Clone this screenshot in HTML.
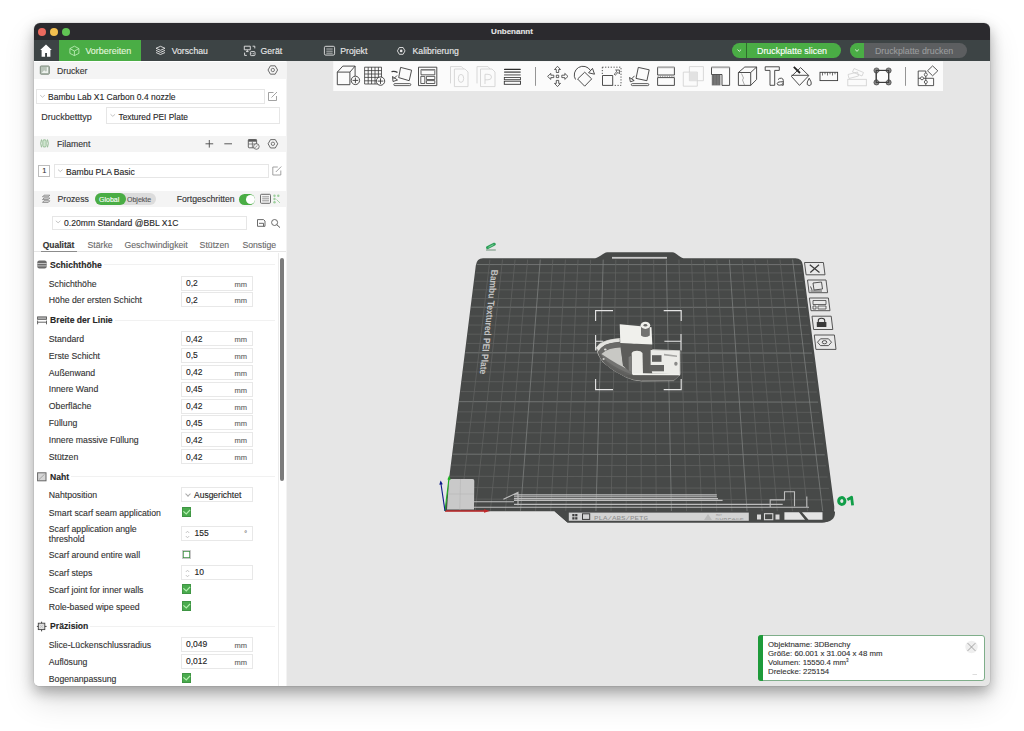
<!DOCTYPE html>
<html><head><meta charset="utf-8">
<style>
*{box-sizing:border-box;margin:0;padding:0}
html,body{width:1024px;height:731px;overflow:hidden;background:#ffffff;font-family:"Liberation Sans",sans-serif}
.a{position:absolute}
#win{position:absolute;left:34px;top:23px;width:956px;height:663px;border-radius:6px 6px 5px 5px;overflow:hidden;background:#e6e6e6;box-shadow:0 0 0 0.5px rgba(0,0,0,0.1),0 6px 14px rgba(0,0,0,0.3),0 14px 32px rgba(0,0,0,0.14)}
#pg{position:absolute;left:-34px;top:-23px;width:1024px;height:731px}
.dot{top:28px;width:8px;height:8px;border-radius:50%}
.tab{top:40.8px;height:20px;color:#eaeaea;font-size:8.7px;line-height:20px;white-space:nowrap}
.hdr{left:34px;width:252px;background:#f4f4f4;}
.ht{font-size:8.7px;color:#333;white-space:nowrap;line-height:10px}
.combo{border:1px solid #e6e6e6;background:#fff;font-size:8.5px;color:#262626;white-space:nowrap;line-height:12px}
.lbl{font-size:8.7px;color:#333;white-space:nowrap;line-height:10px}
.grp{font-size:8.6px;font-weight:bold;color:#262626;white-space:nowrap;line-height:10px}
.inp{position:absolute;left:181px;border:1px solid #e8e8e8;background:#fff;width:72px;height:15px;font-size:8.5px;color:#222;}
.inp .v{position:absolute;left:4px;top:1.5px;line-height:10px}
.inp .u{position:absolute;right:5px;top:3px;font-size:7.5px;color:#666;line-height:10px}
.chk{position:absolute;left:181.8px;width:9.6px;height:9.6px;border-radius:0.6px;background:#4aab4e;box-shadow:inset 0 0 0 0.7px #3b8f40}
svg{position:absolute;overflow:visible}
#pg div{-webkit-text-stroke:0.12px currentColor}
.chev{position:absolute;left:4px;top:4px;width:4px;height:4px;border-right:0.7px solid #aaa;border-bottom:0.7px solid #aaa;transform:rotate(45deg)}
</style></head>
<body>
<div id="win"><div id="pg">
  <!-- title bar -->
  <div class="a" style="left:34px;top:23px;width:956px;height:17px;background:#2b2a2e"></div>
  <div class="a" style="left:34px;top:23px;width:956px;height:17px;color:#e6e6e6;font-weight:bold;font-size:8px;text-align:center;line-height:17px">Unbenannt</div>
  <div class="a dot" style="left:38px;top:27.5px;background:#ec6a5e"></div>
  <div class="a dot" style="left:50px;top:27.5px;background:#f4bf4f"></div>
  <div class="a dot" style="left:62px;top:27.5px;background:#61c454"></div>
  <!-- tab bar -->
  <div class="a" style="left:34px;top:40px;width:956px;height:20.5px;background:#3d4445"></div>
  <div class="a" style="left:58.7px;top:40px;width:82px;height:20.5px;background:#4aad45"></div>
  <div class="a tab" style="left:85.4px;font-size:8.95px;color:#e2f6dc">Vorbereiten</div>
  <div class="a tab" style="left:171.7px">Vorschau</div>
  <div class="a tab" style="left:260.5px">Gerät</div>
  <div class="a tab" style="left:340.3px">Projekt</div>
  <div class="a tab" style="left:412.5px">Kalibrierung</div>
  <!-- slice buttons -->
  <div class="a" style="left:732px;top:43.3px;width:109px;height:14.5px;border-radius:7.5px;background:#4aad45"></div>
  <div class="a" style="left:746px;top:43.3px;width:0.7px;height:14.5px;background:#2f6b2d"></div>
  <div class="a" style="left:757px;top:44.2px;line-height:14.5px;font-size:8.9px;color:#fff;white-space:nowrap">Druckplatte slicen</div>
  <div class="a" style="left:850px;top:43.3px;width:117px;height:14.5px;border-radius:7.5px;background:#5c5e60"></div>
  <div class="a" style="left:850px;top:43.3px;width:14px;height:14.5px;border-radius:7.5px 0 0 7.5px;background:#4aad45"></div>
  <div class="a" style="left:875px;top:44.2px;line-height:14.5px;font-size:8.8px;color:#9a9c9d;white-space:nowrap">Druckplatte drucken</div>

  <!-- left panel -->
  <div class="a" style="left:34px;top:60.5px;width:252px;height:626px;background:#fff"></div>
  <div class="a hdr" style="top:62px;height:16.5px"></div>
  <div class="a ht" style="left:57px;top:65.5px">Drucker</div>
  <div class="a combo" style="left:35.5px;top:89px;width:229px;height:14.6px"></div>
  <div class="a" style="left:48px;top:92.2px;font-size:8.5px;color:#262626;white-space:nowrap;line-height:10px">Bambu Lab X1 Carbon 0.4 nozzle</div>
  <div class="a lbl" style="left:41.2px;top:111.5px;font-size:9px">Druckbetttyp</div>
  <div class="a combo" style="left:106.2px;top:107px;width:173.5px;height:17.4px"></div>
  <div class="a" style="left:118.5px;top:111.5px;font-size:8.4px;color:#262626;white-space:nowrap;line-height:10px">Textured PEI Plate</div>
  <div class="a hdr" style="top:135.5px;height:16.5px"></div>
  <div class="a ht" style="left:57px;top:139px">Filament</div>
  <div class="a" style="left:38.4px;top:164.6px;width:12px;height:12.2px;border:1px solid #bdbdbd;font-size:7.5px;text-align:center;line-height:10px;color:#333">1</div>
  <div class="a combo" style="left:54px;top:164.3px;width:214.5px;height:14px"></div>
  <div class="a" style="left:66px;top:167px;font-size:8.6px;color:#262626;white-space:nowrap;line-height:10px">Bambu PLA Basic</div>
  <div class="a hdr" style="top:191px;height:16px"></div>
  <div class="a ht" style="left:57.5px;top:194px">Prozess</div>
  <div class="a" style="left:94.7px;top:193px;width:61px;height:12px;border-radius:6px;background:#dcdcdc"></div>
  <div class="a" style="left:94.7px;top:193px;width:31.5px;height:12px;border-radius:6px;background:#4aad45"></div>
  <div class="a" style="left:99px;top:195px;font-size:7px;color:#fff;line-height:9px">Global</div>
  <div class="a" style="left:127px;top:195px;font-size:7px;color:#555;line-height:9px">Objekte</div>
  <div class="a ht" style="left:176.7px;top:194px">Fortgeschritten</div>
  <div class="a" style="left:239.4px;top:193.5px;width:16px;height:11px;border-radius:6px;background:#4aad45"></div>
  <div class="a" style="left:245.5px;top:194.5px;width:9px;height:9px;border-radius:50%;background:#fff"></div>
  <div class="a combo" style="left:51.6px;top:215.5px;width:195px;height:14px"></div>
  <div class="a" style="left:64px;top:217.5px;font-size:8.6px;color:#262626;white-space:nowrap;line-height:10px">0.20mm Standard @BBL X1C</div>
  <!-- process tabs -->
  <div class="a" style="left:42.7px;top:239.8px;font-size:8.5px;font-weight:bold;color:#333;line-height:10px">Qualität</div>
  <div class="a lbl" style="left:87.5px;top:239.8px;color:#6a6a6a">Stärke</div>
  <div class="a lbl" style="left:124.4px;top:239.8px;color:#6a6a6a">Geschwindigkeit</div>
  <div class="a lbl" style="left:199.6px;top:239.8px;color:#6a6a6a">Stützen</div>
  <div class="a lbl" style="left:242.4px;top:239.8px;color:#6a6a6a">Sonstige</div>
  <div class="a" style="left:34px;top:250.7px;width:252px;height:1px;background:#e6e6e6"></div>
  <div class="a" style="left:40.5px;top:250.7px;width:36.5px;height:1px;background:#8c8c8c"></div>
  <div id="settings">
<svg style="left:37px;top:260.3px" width="10" height="9" viewBox="0 0 10 9"><rect x="0.3" y="0.5" width="9.4" height="8" rx="2" fill="#6b6b6b"/><rect x="0.3" y="3" width="9.4" height="0.8" fill="#d8d8d8"/><rect x="0.3" y="5.5" width="9.4" height="0.8" fill="#d8d8d8"/></svg>
<div class="a grp" style="left:50.1px;top:259.8px">Schichthöhe</div>
<div class="a" style="left:103.7px;top:264.3px;width:171.3px;height:1px;background:#f1f1f1"></div>
<div class="a lbl" style="left:48.8px;top:278.6px">Schichthöhe</div>
<div class="inp" style="top:275.8px"><span class="v">0,2</span><span class="u">mm</span></div>
<div class="a lbl" style="left:48.8px;top:295.2px">Höhe der ersten Schicht</div>
<div class="inp" style="top:292.4px"><span class="v">0,2</span><span class="u">mm</span></div>
<svg style="left:37px;top:315.8px" width="10" height="9" viewBox="0 0 10 9"><rect x="0.6" y="0.9" width="8.9" height="2.4" fill="#bbb" stroke="#555" stroke-width="0.9"/><path d="M0.6,4.6 V8.3 M9.5,4.6 V8.3 M0.6,6.2 H9.5" fill="none" stroke="#555" stroke-width="0.9"/></svg>
<div class="a grp" style="left:50.1px;top:315.3px">Breite der Linie</div>
<div class="a" style="left:114.7px;top:319.8px;width:160.3px;height:1px;background:#f1f1f1"></div>
<div class="a lbl" style="left:48.8px;top:333.8px">Standard</div>
<div class="inp" style="top:331.0px"><span class="v">0,42</span><span class="u">mm</span></div>
<div class="a lbl" style="left:48.8px;top:350.5px">Erste Schicht</div>
<div class="inp" style="top:347.7px"><span class="v">0,5</span><span class="u">mm</span></div>
<div class="a lbl" style="left:48.8px;top:367.5px">Außenwand</div>
<div class="inp" style="top:364.7px"><span class="v">0,42</span><span class="u">mm</span></div>
<div class="a lbl" style="left:48.8px;top:384.4px">Innere Wand</div>
<div class="inp" style="top:381.6px"><span class="v">0,45</span><span class="u">mm</span></div>
<div class="a lbl" style="left:48.8px;top:401.3px">Oberfläche</div>
<div class="inp" style="top:398.5px"><span class="v">0,42</span><span class="u">mm</span></div>
<div class="a lbl" style="left:48.8px;top:418.2px">Füllung</div>
<div class="inp" style="top:415.4px"><span class="v">0,45</span><span class="u">mm</span></div>
<div class="a lbl" style="left:48.8px;top:435.1px">Innere massive Füllung</div>
<div class="inp" style="top:432.3px"><span class="v">0,42</span><span class="u">mm</span></div>
<div class="a lbl" style="left:48.8px;top:452.0px">Stützen</div>
<div class="inp" style="top:449.2px"><span class="v">0,42</span><span class="u">mm</span></div>
<svg style="left:37px;top:472.2px" width="10" height="10" viewBox="0 0 10 10"><rect x="0.6" y="0.8" width="8.4" height="8" fill="#d6d6d6" stroke="#666" stroke-width="1"/><path d="M2,7.5 L7.6,2.2" stroke="#999" stroke-width="0.8"/></svg>
<div class="a grp" style="left:50.1px;top:471.7px">Naht</div>
<div class="a" style="left:71.2px;top:476.2px;width:203.8px;height:1px;background:#f1f1f1"></div>
<div class="a lbl" style="left:48.8px;top:490.2px">Nahtposition</div>
<div class="inp" style="top:487.4px"><span class="chev"></span><span class="v" style="left:12px">Ausgerichtet</span></div>
<div class="a lbl" style="left:48.8px;top:507.5px">Smart scarf seam application</div>
<div class="chk" style="top:507.0px"><svg style="left:0;top:0" width="10" height="10" viewBox="0 0 10 10"><path d="M1.4,4.4 L4.3,6.9 L8.1,2.9" fill="none" stroke="#b5f0b0" stroke-width="1.25"/></svg></div>
<div class="a lbl" style="left:48.8px;top:523.7px">Scarf application angle</div>
<div class="a lbl" style="left:48.8px;top:533.9px">threshold</div>
<div class="inp" style="top:525.7px"><svg style="left:3px;top:3px" width="5" height="9" viewBox="0 0 5 9"><path d="M0.8 3L2.5 1.2L4.2 3M0.8 6L2.5 7.8L4.2 6" fill="none" stroke="#b0b0b0" stroke-width="0.7"/></svg><span class="v" style="left:12.5px">155</span><span class="u" style="top:2px;font-size:7px">°</span></div>
<div class="a lbl" style="left:48.8px;top:550.4px">Scarf around entire wall</div>
<div class="chk" style="top:549.9px;background:#fff;border:1px solid #c8c8c8"></div>
<div class="a lbl" style="left:48.8px;top:567.5px">Scarf steps</div>
<div class="inp" style="top:564.7px"><svg style="left:3px;top:3px" width="5" height="9" viewBox="0 0 5 9"><path d="M0.8 3L2.5 1.2L4.2 3M0.8 6L2.5 7.8L4.2 6" fill="none" stroke="#b0b0b0" stroke-width="0.7"/></svg><span class="v" style="left:12.5px">10</span></div>
<div class="a lbl" style="left:48.8px;top:584.5px">Scarf joint for inner walls</div>
<div class="chk" style="top:584.0px"><svg style="left:0;top:0" width="10" height="10" viewBox="0 0 10 10"><path d="M1.4,4.4 L4.3,6.9 L8.1,2.9" fill="none" stroke="#b5f0b0" stroke-width="1.25"/></svg></div>
<div class="a lbl" style="left:48.8px;top:601.5px">Role-based wipe speed</div>
<div class="chk" style="top:601.0px"><svg style="left:0;top:0" width="10" height="10" viewBox="0 0 10 10"><path d="M1.4,4.4 L4.3,6.9 L8.1,2.9" fill="none" stroke="#b5f0b0" stroke-width="1.25"/></svg></div>
<svg style="left:36px;top:620.5px" width="11" height="11" viewBox="0 0 11 11"><path d="M5.6,0.7 V10.4 M0.9,5.4 H10.6" stroke="#444" stroke-width="1"/><rect x="2.3" y="2.2" width="6.5" height="6.4" fill="#e2e2e2" stroke="#444" stroke-width="0.9"/><path d="M3.5,3.5 L7.6,7.4 M7.6,3.5 L3.5,7.4" stroke="#bbb" stroke-width="0.7"/></svg>
<div class="a grp" style="left:50.1px;top:621.0px">Präzision</div>
<div class="a" style="left:90.3px;top:625.5px;width:184.7px;height:1px;background:#f1f1f1"></div>
<div class="a lbl" style="left:48.8px;top:639.6px">Slice-Lückenschlussradius</div>
<div class="inp" style="top:636.8px"><span class="v">0,049</span><span class="u">mm</span></div>
<div class="a lbl" style="left:48.8px;top:656.5px">Auflösung</div>
<div class="inp" style="top:653.7px"><span class="v">0,012</span><span class="u">mm</span></div>
<div class="a lbl" style="left:48.8px;top:673.7px">Bogenanpassung</div>
<div class="chk" style="top:673.2px"><svg style="left:0;top:0" width="10" height="10" viewBox="0 0 10 10"><path d="M1.4,4.4 L4.3,6.9 L8.1,2.9" fill="none" stroke="#b5f0b0" stroke-width="1.25"/></svg></div>
</div>
  <!-- canvas -->
<div id="canvas">
<svg style="left:0;top:0" width="1024" height="731" viewBox="0 0 1024 731">
<path d="M483,258.2 L595.2,258.2 C598,258.2 604,252.3 607.5,252.3 L672.2,252.3 C676,252.3 680.5,258.2 683.5,258.2 L795.5,258.2 Q802,258.2 802.8,265 L834.2,506 Q835.2,522.4 822,522.4 L567.5,522.4 L554.5,511.2 L445,511.2 L475.8,265.5 Q476.8,258.2 483,258.2 Z" fill="#474948"/>
<g>
<line x1="446.67" y1="499.06" x2="830.41" y2="499.87" stroke="#616362" stroke-width="0.75"/>
<line x1="448.14" y1="487.58" x2="828.96" y2="488.35" stroke="#616362" stroke-width="0.75"/>
<line x1="449.59" y1="476.27" x2="827.53" y2="477.00" stroke="#616362" stroke-width="0.75"/>
<line x1="451.01" y1="465.13" x2="826.12" y2="465.81" stroke="#616362" stroke-width="0.75"/>
<line x1="452.42" y1="454.16" x2="824.74" y2="454.80" stroke="#7f8180" stroke-width="0.75"/>
<line x1="453.80" y1="443.34" x2="823.37" y2="443.95" stroke="#616362" stroke-width="0.75"/>
<line x1="455.16" y1="432.69" x2="822.03" y2="433.26" stroke="#616362" stroke-width="0.75"/>
<line x1="456.51" y1="422.19" x2="820.70" y2="422.72" stroke="#616362" stroke-width="0.75"/>
<line x1="457.83" y1="411.85" x2="819.40" y2="412.34" stroke="#616362" stroke-width="0.75"/>
<line x1="459.14" y1="401.65" x2="818.11" y2="402.11" stroke="#7f8180" stroke-width="0.75"/>
<line x1="460.42" y1="391.60" x2="816.84" y2="392.02" stroke="#616362" stroke-width="0.75"/>
<line x1="461.69" y1="381.69" x2="815.59" y2="382.08" stroke="#616362" stroke-width="0.75"/>
<line x1="462.94" y1="371.92" x2="814.36" y2="372.28" stroke="#616362" stroke-width="0.75"/>
<line x1="464.18" y1="362.29" x2="813.14" y2="362.61" stroke="#616362" stroke-width="0.75"/>
<line x1="465.39" y1="352.79" x2="811.94" y2="353.08" stroke="#7f8180" stroke-width="0.75"/>
<line x1="466.59" y1="343.42" x2="810.76" y2="343.69" stroke="#616362" stroke-width="0.75"/>
<line x1="467.78" y1="334.18" x2="809.60" y2="334.42" stroke="#616362" stroke-width="0.75"/>
<line x1="468.95" y1="325.06" x2="808.45" y2="325.27" stroke="#616362" stroke-width="0.75"/>
<line x1="470.10" y1="316.07" x2="807.31" y2="316.25" stroke="#616362" stroke-width="0.75"/>
<line x1="471.23" y1="307.20" x2="806.19" y2="307.35" stroke="#7f8180" stroke-width="0.75"/>
<line x1="472.35" y1="298.44" x2="805.09" y2="298.57" stroke="#616362" stroke-width="0.75"/>
<line x1="473.46" y1="289.81" x2="804.00" y2="289.91" stroke="#616362" stroke-width="0.75"/>
<line x1="474.55" y1="281.28" x2="802.92" y2="281.36" stroke="#616362" stroke-width="0.75"/>
<line x1="475.63" y1="272.87" x2="801.86" y2="272.92" stroke="#616362" stroke-width="0.75"/>
<line x1="476.70" y1="264.56" x2="800.81" y2="264.60" stroke="#7f8180" stroke-width="0.75"/>
<line x1="460.23" y1="510.75" x2="489.91" y2="259.63" stroke="#616362" stroke-width="0.75"/>
<line x1="475.29" y1="510.79" x2="502.49" y2="259.63" stroke="#616362" stroke-width="0.75"/>
<line x1="490.36" y1="510.82" x2="515.07" y2="259.64" stroke="#616362" stroke-width="0.75"/>
<line x1="505.43" y1="510.85" x2="527.66" y2="259.64" stroke="#616362" stroke-width="0.75"/>
<line x1="520.50" y1="510.89" x2="540.25" y2="259.64" stroke="#7f8180" stroke-width="0.75"/>
<line x1="535.58" y1="510.92" x2="552.84" y2="259.64" stroke="#616362" stroke-width="0.75"/>
<line x1="550.66" y1="510.96" x2="565.43" y2="259.64" stroke="#616362" stroke-width="0.75"/>
<line x1="565.74" y1="510.99" x2="578.03" y2="259.64" stroke="#616362" stroke-width="0.75"/>
<line x1="580.83" y1="511.02" x2="590.63" y2="259.64" stroke="#616362" stroke-width="0.75"/>
<line x1="595.93" y1="511.06" x2="603.23" y2="259.64" stroke="#7f8180" stroke-width="0.75"/>
<line x1="611.02" y1="511.09" x2="615.84" y2="259.64" stroke="#616362" stroke-width="0.75"/>
<line x1="626.12" y1="511.12" x2="628.45" y2="259.64" stroke="#616362" stroke-width="0.75"/>
<line x1="641.23" y1="511.16" x2="641.06" y2="259.64" stroke="#616362" stroke-width="0.75"/>
<line x1="656.34" y1="511.19" x2="653.67" y2="259.64" stroke="#616362" stroke-width="0.75"/>
<line x1="671.45" y1="511.22" x2="666.29" y2="259.64" stroke="#7f8180" stroke-width="0.75"/>
<line x1="686.56" y1="511.26" x2="678.91" y2="259.64" stroke="#616362" stroke-width="0.75"/>
<line x1="701.68" y1="511.29" x2="691.53" y2="259.65" stroke="#616362" stroke-width="0.75"/>
<line x1="716.81" y1="511.32" x2="704.15" y2="259.65" stroke="#616362" stroke-width="0.75"/>
<line x1="731.94" y1="511.36" x2="716.78" y2="259.65" stroke="#616362" stroke-width="0.75"/>
<line x1="747.07" y1="511.39" x2="729.41" y2="259.65" stroke="#7f8180" stroke-width="0.75"/>
<line x1="762.20" y1="511.42" x2="742.04" y2="259.65" stroke="#616362" stroke-width="0.75"/>
<line x1="777.34" y1="511.46" x2="754.68" y2="259.65" stroke="#616362" stroke-width="0.75"/>
<line x1="792.49" y1="511.49" x2="767.32" y2="259.65" stroke="#616362" stroke-width="0.75"/>
<line x1="807.63" y1="511.53" x2="779.96" y2="259.65" stroke="#616362" stroke-width="0.75"/>
<line x1="822.78" y1="511.56" x2="792.60" y2="259.65" stroke="#7f8180" stroke-width="0.75"/>
</g>
<path d="M554.5,511.2 L834.3,511.2 L835,512 Q835.2,522.4 822,522.4 L567.5,522.4 Z" fill="#474948"/>
<rect x="612" y="256.9" width="55" height="1.8" fill="#c9c9c9"/>
<text transform="matrix(-0.112,0.994,-1,0,491.5,269.8)" font-family="Liberation Sans" font-weight="bold" font-size="9.6" fill="#c4c4c4" textLength="105" lengthAdjust="spacingAndGlyphs">Bambu Textured PEI Plate</text>
<path d="M450,479 L472.5,479 Q474.5,479 474.3,481 L474,509.5 L447,509.5 L449,481 Q449.2,479 450,479Z" fill="#c9c9c9"/>
<line x1="460.5" y1="479" x2="459.8" y2="509.5" stroke="#b5b5b5" stroke-width="0.6"/>
<line x1="448" y1="494" x2="474" y2="494" stroke="#b5b5b5" stroke-width="0.6"/>
<path d="M474,501.7 H514 M474,507.2 H809 M503.4,499.3 L518,492.3 V505.2 M514,494.9 H716.8 M514,496.8 H716.8 M514,498.6 H718 M514,500.4 H722.6 M514,504.4 H782.7 M770.2,507.5 V499.9 H784.5 V491.7 H794.5 V506.3 M806.8,496.4 V507" stroke="#bdbdbd" stroke-width="1.1" fill="none"/>
<rect x="568.8" y="512.6" width="180" height="8.2" fill="#d3d3d3"/>
<g fill="#3c3c3c"><rect x="572.3" y="514" width="2.2" height="2.3"/><rect x="575.2" y="514" width="2.2" height="2.3"/><rect x="572.3" y="517.2" width="2.2" height="2.3"/><rect x="575.2" y="517.2" width="2.2" height="2.3"/></g>
<rect x="582.5" y="513.8" width="7.2" height="5.6" fill="none" stroke="#3c3c3c" stroke-width="1"/>
<text x="594" y="519.6" font-family="Liberation Mono" font-size="6.2" fill="#8e8e8e" textLength="54" lengthAdjust="spacingAndGlyphs">PLA/ABS/PETG</text>
<path d="M704,520 L708,514 L712,520Z" fill="#bcbcbc"/>
<text x="716" y="515.8" font-family="Liberation Mono" font-size="3.3" fill="#9a9a9a">HOT</text>
<text x="715" y="519.6" font-family="Liberation Mono" font-size="3.6" fill="#9a9a9a" textLength="29" lengthAdjust="spacingAndGlyphs">SURFACE</text>
<g fill="#d8d8d8"><rect x="757" y="514.5" width="4" height="5"/><rect x="775.5" y="514.5" width="4" height="5"/></g>
<rect x="764.5" y="513.7" width="8.3" height="6" fill="none" stroke="#d8d8d8" stroke-width="1.1"/>
<path d="M784.4,512.2 H799 L805,519.8 H784.4Z M802,512.2 H822.5 V519.8 H808.5Z" fill="#e4e4e4"/>
<line x1="445" y1="511" x2="487" y2="511" stroke="#c0282a" stroke-width="1.3"/><path d="M484,509.3 L490,511 L484,512.7Z" fill="#c0282a"/>
<line x1="445" y1="511" x2="449" y2="478" stroke="#1bb21f" stroke-width="1.1"/><path d="M447.4,479.5 L449.3,475.3 L450.6,479.9Z" fill="#1bb21f"/>
<line x1="445" y1="511" x2="441" y2="484" stroke="#0d1a8a" stroke-width="1.1"/><path d="M439.3,484.8 L440.6,480.5 L442.8,484.3Z" fill="#0d1a8a"/>
<ellipse cx="841.8" cy="501" rx="3.1" ry="3.4" fill="none" stroke="#119e48" stroke-width="3" transform="rotate(-8 841.9 501.1)"/><path d="M847.3,499.8 L851.6,497.3 L852.6,505.3" stroke="#119e48" stroke-width="2.8" fill="none" stroke-linejoin="round"/>
<line x1="487.5" y1="247.6" x2="494.3" y2="244.2" stroke="#2f9f5a" stroke-width="3" stroke-linecap="round"/><line x1="488.5" y1="247.3" x2="493.5" y2="244.7" stroke="#8fdcab" stroke-width="0.8"/><line x1="486" y1="250" x2="495.8" y2="250" stroke="#6e927a" stroke-width="1"/>
<path d="M804.5,262.5 H823.4 L825,274.8 H806.1Z" fill="#e9e9e9" stroke="#555" stroke-width="1"/>
<path d="M807.5,280 H826.0 L827.6,292.7 H809.1Z" fill="#e9e9e9" stroke="#555" stroke-width="1"/>
<path d="M809.4,298 H828.4 L830,310.7 H811.0Z" fill="#e9e9e9" stroke="#555" stroke-width="1"/>
<path d="M812,316.2 H831.1999999999999 L832.8,329.5 H813.6Z" fill="#e9e9e9" stroke="#555" stroke-width="1"/>
<path d="M814.3,335 H834.4 L836,349.4 H815.9Z" fill="#e9e9e9" stroke="#555" stroke-width="1"/>
<path d="M809.8,264.8 L819.5,272.5 M819,264.8 L810.3,272.5" stroke="#3a3a3a" stroke-width="1.2"/>
<path d="M813,283 L821.5,282 L822.5,289 L814,290Z M810.5,286.5 L812,290 M810.5,291 H822" fill="none" stroke="#444" stroke-width="0.9"/>
<path d="M813,300.5 H826 V304.5 H813Z M813,306 H816 V309 H813Z M818,306 H826 V309 H818Z" fill="none" stroke="#444" stroke-width="0.8"/>
<path d="M818.3,322.5 V320.5 Q818.3,318.2 821.5,318.2 Q824.7,318.2 824.7,320.5 V322.5" fill="none" stroke="#3a3a3a" stroke-width="1.1"/><rect x="816.8" y="322" width="9.6" height="5" rx="0.6" fill="#3a3a3a"/>
<path d="M820.5,338.8 L828.5,338.8 L831.5,342.2 L828.5,345.6 L820.5,345.6 L817.5,342.2Z" fill="none" stroke="#444" stroke-width="0.9"/><ellipse cx="824.5" cy="342.2" rx="2.3" ry="1.6" fill="none" stroke="#444" stroke-width="0.9"/>
</svg>
</div>
<div id="boat">
<svg style="left:0;top:0" width="1024" height="731" viewBox="0 0 1024 731">
<path d="M613,310.6 H595.6 V321 M663.7,310.6 H681.2 V321 M613,389.6 H595.6 V379 M663.7,389.6 H681.2 V379 M595.6,335 V350.4 M595.6,341.2 H603.3 M681,334 V350.4 M664.4,341.2 H681" stroke="#e6e6e6" stroke-width="1.1" fill="none"/>
<path d="M596.4,347.7 Q599,343.5 602.3,342.5 Q606,340.8 609.1,340.1 Q614,339 619.5,338.6 L652,349.6 L679.8,350.8 L680,374.7 L673.5,380.6 L642,380.9 Q633,380.5 626,377 Q612,370.5 603,362 Q597.5,355 596.4,347.7Z" fill="#636361" stroke="#e4e4e0" stroke-width="0.7"/>
<path d="M597.5,349 Q600,356 606,362 Q615,370 630,375.5 L642,377.3 L642,380.5 Q632,380.2 625,376.8 Q611,370 603.5,362.5 Q598,356 597.5,349Z" fill="#5f5f5d"/>
<path d="M597.5,348.5 Q601,356 608,362 Q618,369.5 632,374.5 L642,376.5 L642,373 Q633,371 624,366 Q612,359 605,352 Q600,347 597.5,348.5Z" fill="#737371"/>
<path d="M596.4,347.7 Q599,343.5 602.3,342.5 Q606,340.8 609.1,340.1 Q614,339 619.5,338.6 L620,341.8 Q614,342.3 609.8,343.3 Q605,344.6 602.3,347 Q600,349.5 599,351.5Z" fill="#e4e4e0"/>
<path d="M598.5,351 Q601,347.2 605,345 Q612,342.5 620,341.8 L620.5,347 Q613,347.5 608,349.5 Q603,352 601.5,354Z" fill="#6a6a68"/>
<path d="M601.5,354 Q605,350.5 610,349 Q615,347.8 620.5,347.5 L623,365 L626,368.5 Q617,364 610,359.5 Q604.5,356 601.5,354Z" fill="#c8c8c4"/>
<path d="M620.5,343 L652.3,344.4 L652.3,373.3 L633,373 Q627,370 623,365.5 Z" fill="#5c5c5a"/>
<path d="M631.7,353 Q633,350.7 637,350.7 Q641,350.8 642.5,353 L643,375 L632,374.5Z" fill="#ecece8"/>
<path d="M628.6,357 L631.7,355.5 L632,372.5 L628.8,370.5Z" fill="#7c7c7a"/>
<path d="M619.7,324.2 L651.5,327.3 L652.3,344.4 L620.3,342.9Z" fill="#f0f0ec"/>
<path d="M641,325.5 V335.5 Q645.3,338.5 649.8,335.5 V325.5Z" fill="#727270"/>
<ellipse cx="645.4" cy="325.3" rx="4.8" ry="3.6" fill="#f0f0ec"/><ellipse cx="645.4" cy="325.3" rx="1.9" ry="1.3" fill="#6a6a68"/>
<path d="M650.6,350 L679.7,350.7 L679.8,374.2 L652.3,373.5 L650.6,365Z" fill="#ecece8"/>
<path d="M664,353.8 L677,355.5 L677,357 L664,355.6Z" fill="#a5a5a2"/>
<rect x="652" y="355.2" width="9.5" height="6.6" fill="#5e5e5c"/>
<path d="M649.6,365 L664,365 L664,371.3 L649.6,371.3Z" fill="#626260"/>
<ellipse cx="675.9" cy="363.7" rx="1.7" ry="2" fill="#8a8a88"/>
<path d="M633,373 L679.8,374 L679.8,375.6 L633,375.2Z" fill="#f2f2ee"/>
<path d="M626,375.2 L679.8,375.6 L673.5,380.4 L642,380.6 Q633,380.3 626,375.2Z" fill="#5a5a58"/>
<ellipse cx="605.3" cy="349.5" rx="1.3" ry="1.1" fill="#e0e0dc"/><ellipse cx="603.6" cy="359" rx="1.1" ry="1" fill="#cfcfcb"/>
</svg>
</div>
<div id="toolbar">
<svg style="left:0;top:0" width="1024" height="731" viewBox="0 0 1024 731">
<rect x="333.2" y="61.2" width="609.8" height="29.8" fill="#fbfbfb"/>
<path d="M337.3,72.1 H349.9 V84.7 H337.3Z M337.3,72.1 L342.8,66.1 H355.1 L349.9,72.1 M355.1,66.1 V76" fill="none" stroke="#3a3a3a" stroke-width="0.9"/>
<circle cx="355.4" cy="80.4" r="4.2" fill="#fbfbfb" stroke="#3a3a3a" stroke-width="0.9"/><path d="M352.6,80.4 H358.2 M355.4,77.6 V83.2" stroke="#3a3a3a" stroke-width="0.9"/>
<path d="M364.6,67.2 H381.5 V84 H364.6Z M368.2,67.2 V84 M371.6,67.2 V84 M375,67.2 V84 M378.4,67.2 V84 M364.6,70.6 H381.5 M364.6,74 H381.5 M364.6,77.4 H381.5 M364.6,80.8 H381.5" fill="none" stroke="#3a3a3a" stroke-width="0.8"/>
<circle cx="380.5" cy="81.1" r="4.2" fill="#fbfbfb" stroke="#3a3a3a" stroke-width="0.9"/><path d="M377.7,81.1 H383.3 M380.5,78.3 V83.9" stroke="#3a3a3a" stroke-width="0.9"/>
<path d="M400.6,67.4 L411.6,70.2 L409.2,80.7 L398.7,77.6Z" fill="none" stroke="#3a3a3a" stroke-width="0.9"/>
<path d="M391.5,71.6 Q395,70.8 397.5,72.5" fill="none" stroke="#3a3a3a" stroke-width="1.4"/><path d="M397,75.5 L393.5,79 M392.5,76.5 L393,81.5 L397.5,80Z" fill="none" stroke="#3a3a3a" stroke-width="0.9"/>
<rect x="393.8" y="83.6" width="17" height="2" rx="1" fill="none" stroke="#3a3a3a" stroke-width="0.8"/>
<path d="M418.5,67.2 H436.8 V85.6 H418.5Z" fill="none" stroke="#3a3a3a" stroke-width="0.9"/><path d="M421,69.5 H434.8 V74.8 H421Z M420.8,76.4 H424.8 V83.5 H420.8Z M426.4,76.4 H434.8 V79.5 H426.4Z M426.4,80.6 H434.8 V83.5 H426.4Z" fill="none" stroke="#3a3a3a" stroke-width="0.8"/>
<rect x="421" y="69.5" width="13.8" height="1.3" fill="#999"/>
<path d="M450.5,83.4 V66.6 H461.5 L463.75,69 M454.4,69 H465 L468,72 V86.6 H454.4Z" fill="none" stroke="#cfcfcf" stroke-width="0.8"/><ellipse cx="461" cy="78.4" rx="2.7" ry="4" fill="none" stroke="#cfcfcf" stroke-width="0.8"/>
<path d="M477,83.4 V66.6 H488 L490,69 M480.5,69 H492 L495,72 V86.6 H480.5Z" fill="none" stroke="#cfcfcf" stroke-width="0.8"/><path d="M485,84 V74.3 H488 Q491.5,74.3 491.5,77 Q491.5,79.8 488,79.8 H485" fill="none" stroke="#cfcfcf" stroke-width="0.8"/>
<rect x="504" y="68.8" width="16.8" height="1.3" rx="0.6" fill="#2e2e2e"/><rect x="504" y="71.2" width="16.8" height="1.7" rx="0.6" fill="#777"/><rect x="504" y="74" width="16.8" height="1.8" rx="0.6" fill="#999"/>
<rect x="504.3" y="77.4" width="16.2" height="2.3" fill="none" stroke="#333" stroke-width="0.8"/><rect x="504.3" y="81.2" width="16.2" height="3.1" fill="none" stroke="#333" stroke-width="0.9"/>
<rect x="535" y="67" width="0.9" height="18.8" fill="#8a8a8a"/>
<path d="M557.5,66.3 L560.5,69.5 H558.7 V72.5 H556.3 V69.5 H554.5Z M557.5,86.6 L560.5,83.4 H558.7 V80.4 H556.3 V83.4 H554.5Z M547.6,76.4 L550.8,73.4 V75.2 H553.8 V77.6 H550.8 V79.4Z M568,76.4 L564.8,73.4 V75.2 H561.8 V77.6 H564.8 V79.4Z M556.3,75.2 H558.7 V77.6 H556.3Z" fill="none" stroke="#3a3a3a" stroke-width="0.8" stroke-linejoin="round"/>
<path d="M575.5,79.5 A8.3,8.3 0 0 1 590.5,70.5" fill="none" stroke="#3a3a3a" stroke-width="0.9"/><path d="M588.6,72.8 L592.5,68.4 L594.5,74.2Z" fill="none" stroke="#3a3a3a" stroke-width="0.9"/><path d="M584.7,72.2 L591.7,78.9 L584.7,86.2 L577.6,79Z" fill="#fbfbfb" stroke="#3a3a3a" stroke-width="0.9"/>
<path d="M602.3,67.2 H621 V85.4 H612.7" fill="none" stroke="#3a3a3a" stroke-width="0.9" stroke-dasharray="1.2,1.6"/><path d="M602.3,67.2 V75" fill="none" stroke="#3a3a3a" stroke-width="0.9" stroke-dasharray="1.2,1.6"/><path d="M602.5,75.5 H612.7 V85.4 H602.5Z" fill="none" stroke="#3a3a3a" stroke-width="0.9"/>
<path d="M614.2,74.2 L617,71.4 L615.6,70 H619.4 V73.8 L618,72.4 L615.2,75.2Z" fill="none" stroke="#3a3a3a" stroke-width="0.8"/>
<path d="M638.3,67.4 L649.2,69.8 L646.9,80.7 L636,78.4Z" fill="none" stroke="#3a3a3a" stroke-width="0.9"/><path d="M634.5,75.8 L631.5,79 M629.5,77.5 L630.4,81.8 L634.2,80.5Z" fill="none" stroke="#3a3a3a" stroke-width="0.9"/><rect x="631.3" y="83.6" width="17.5" height="2" rx="1" fill="none" stroke="#3a3a3a" stroke-width="0.8"/>
<path d="M657.6,67.2 H674.4 V75 H657.6Z M657.6,77.6 H674.4 V85.4 H657.6Z" fill="none" stroke="#3a3a3a" stroke-width="0.9"/><rect x="657.6" y="67" width="16.8" height="1.2" fill="#aaa"/><path d="M657.6,76.3 H674.4" stroke="#777" stroke-width="0.9" stroke-dasharray="1,1.3"/>
<path d="M689.4,66.6 H703.4 V80.7 H689.4Z M683.3,72.1 H697.3 V86.2 H683.3Z" fill="none" stroke="#cfcfcf" stroke-width="0.8"/><rect x="689.4" y="72.1" width="7.9" height="8.6" fill="#e2e2e2"/>
<path d="M711.5,67.2 H729.6 V85.4 H722 V74.5 H711.5Z" fill="none" stroke="#3a3a3a" stroke-width="0.9"/><rect x="711.5" y="67" width="18.1" height="1.2" fill="#aaa"/><rect x="711.8" y="74.8" width="8.6" height="10.6" fill="#6a6a6a"/><path d="M712.5,76 H719.8 M712.5,78 H719.8 M712.5,80 H719.8 M712.5,82 H719.8 M712.5,84 H719.8" stroke="#bbb" stroke-width="0.5" stroke-dasharray="0.6,0.9"/>
<path d="M738.4,72.5 H750.7 V85.4 H738.4Z M738.4,72.5 L744.8,67 H756.6 L750.7,72.5 M756.6,67 V79.5 L750.7,85.4" fill="none" stroke="#3a3a3a" stroke-width="0.9"/><path d="M741.5,73.5 L743.5,78 L742.5,80 L744.5,85" fill="none" stroke="#999" stroke-width="0.8"/>
<path d="M765.2,66.8 H779.3 V70.4 H774.7 V85.3 H770 V70.4 H765.2Z" fill="none" stroke="#3a3a3a" stroke-width="0.9"/>
<path d="M778,79.6 Q779.5,77.8 781.5,78.2 Q783.3,78.6 783.3,80.5 V85.2 H781.6 M783.2,81.8 H780.5 Q777.2,81.8 777.2,83.6 Q777.2,85.4 779.8,85.2 Q781.8,85 783,83.5" fill="none" stroke="#3a3a3a" stroke-width="0.9"/>
<path d="M791.4,76.4 L800.6,67.6 L808.8,75.6 L799.5,85.4Z M791.4,75.3 H808.5" fill="none" stroke="#3a3a3a" stroke-width="0.9"/><path d="M793.8,66.8 L800,73" stroke="#222" stroke-width="1.8"/><path d="M809.2,78.2 Q812,82.5 811.2,84.5 Q809.2,86.8 807.2,84.5 Q806.5,82.5 809.2,78.2Z" fill="none" stroke="#3a3a3a" stroke-width="0.9"/>
<rect x="820" y="72.3" width="17.6" height="8.3" fill="none" stroke="#3a3a3a" stroke-width="0.9"/><path d="M822.5,72.3 V75.5 M825,72.3 V74.3 M827.5,72.3 V75.5 M830,72.3 V74.3 M832.5,72.3 V75.5 M835,72.3 V74.3" stroke="#3a3a3a" stroke-width="0.7"/>
<rect x="847.8" y="79.3" width="18.5" height="6.5" fill="none" stroke="#cfcfcf" stroke-width="0.8"/><path d="M848,74.5 L857.5,72 L858.5,76 L849,78.5Z M854,68.5 L863.5,72.5 L862,76 L852.5,72Z" fill="none" stroke="#cfcfcf" stroke-width="0.8"/>
<rect x="876.2" y="70.4" width="12.5" height="12" fill="#fbfbfb" stroke="#3a3a3a" stroke-width="1"/>
<circle cx="876.5" cy="70.5" r="2.6" fill="#888" stroke="#333" stroke-width="0.6"/>
<circle cx="888.6" cy="70.5" r="2.6" fill="#888" stroke="#333" stroke-width="0.6"/>
<circle cx="876.5" cy="82.4" r="2.6" fill="#888" stroke="#333" stroke-width="0.6"/>
<circle cx="888.6" cy="82.4" r="2.6" fill="#888" stroke="#333" stroke-width="0.6"/>
<rect x="878" y="72.3" width="9" height="8.3" fill="#fbfbfb"/><rect x="876.2" y="70.4" width="12.5" height="12" fill="none" stroke="#3a3a3a" stroke-width="1"/>
<rect x="905.1" y="67" width="0.9" height="18.8" fill="#8a8a8a"/>
<path d="M918.2,71 H925.8 V85.6 H918.2Z M918.2,78.3 H933.6 V85.6 H925.8" fill="none" stroke="#3a3a3a" stroke-width="0.85"/>
<circle cx="922" cy="78.3" r="1.5" fill="#fbfbfb" stroke="#3a3a3a" stroke-width="0.8"/><circle cx="925.8" cy="82" r="1.5" fill="#fbfbfb" stroke="#3a3a3a" stroke-width="0.8"/><circle cx="925.8" cy="74.6" r="1.5" fill="#fbfbfb" stroke="#3a3a3a" stroke-width="0.8"/>
<path d="M927.5,70.8 L932.6,65.9 L937.8,70.8 L932.6,75.8Z" fill="#fbfbfb" stroke="#3a3a3a" stroke-width="0.85"/>
<path d="M921,78.3 H923 M925.8,81 V83 M925.8,73.6 V75.6" stroke="#fbfbfb" stroke-width="0.9"/>
</svg>
</div>
<div id="icons">
<svg style="left:0;top:0" width="1024" height="731" viewBox="0 0 1024 731">
<path d="M46,44.6 L51.8,50 H50.4 V56.8 H47 V53 H45.1 V56.8 H41.6 V50 H40.2Z" fill="#fff"/>
<path d="M74.4,46.2 L78.9,48.6 V53.4 L74.4,55.6 L69.9,53.4 V48.6Z M69.9,48.6 L74.4,51 L78.9,48.6 M74.4,51 V55.6" fill="none" stroke="#c6f2c0" stroke-width="0.8" stroke-linejoin="round"/>
<path d="M160.5,46.3 L165,48.3 L160.5,50.3 L156,48.3Z M156,50.4 L160.5,52.4 L165,50.4 M156,52.5 L160.5,54.5 L165,52.5" fill="none" stroke="#e6e6e6" stroke-width="0.9" stroke-linejoin="round"/>
<path d="M244.3,46.2 H250.3 V49.8 H244.3Z M247.3,49.8 V51.6 M246,51.6 H248.6 M244.6,52.6 V55.4 H246.8 M252.6,46.2 H254.8 V48.4" fill="none" stroke="#e6e6e6" stroke-width="0.9"/><rect x="250.4" y="51.6" width="4.6" height="4" rx="0.8" fill="none" stroke="#e6e6e6" stroke-width="0.9"/><path d="M251.9,53 V54.3 M253.5,53 V54.3" stroke="#e6e6e6" stroke-width="0.6"/>
<rect x="324.4" y="46.3" width="10.2" height="8.8" rx="1.3" fill="none" stroke="#e6e6e6" stroke-width="0.9"/><path d="M326.3,49 H332.7 M326.3,51.2 H332.7 M326.3,53.2 H332.7" stroke="#e6e6e6" stroke-width="0.7"/>
<path d="M399.3,47.5 H403.1 L405,50.9 L403.1,54.3 H399.3 L397.4,50.9Z" fill="none" stroke="#e6e6e6" stroke-width="0.9"/><circle cx="401.2" cy="50.9" r="1.3" fill="#e6e6e6"/>
<path d="M737.5,49.6 L739.3,51.3 L741.1,49.6" fill="none" stroke="#fff" stroke-width="0.8"/>
<path d="M855.2,49.6 L857,51.3 L858.8,49.6" fill="none" stroke="#fff" stroke-width="0.8"/>
<rect x="40.3" y="66" width="9" height="8.2" rx="0.8" fill="#b9c4b9" stroke="#7d8a7d" stroke-width="1"/><path d="M41.5,73 L44.2,70.3 L46,71.8 L48,69.5 V73Z" fill="#eef2ee"/><rect x="46.8" y="67.2" width="1.2" height="5.8" fill="#eef2ee"/>
<path d="M270.40000000000003,65.824 H275.2 L277.6,70 L275.2,74.176 H270.40000000000003 L268.0,70Z" fill="none" stroke="#5a5a5a" stroke-width="0.9" stroke-linejoin="round"/><circle cx="272.8" cy="70" r="1.68" fill="none" stroke="#5a5a5a" stroke-width="0.8"/>
<path d="M270.5,139.62400000000002 H275.29999999999995 L277.7,143.8 L275.29999999999995,147.976 H270.5 L268.09999999999997,143.8Z" fill="none" stroke="#5a5a5a" stroke-width="0.9" stroke-linejoin="round"/><circle cx="272.9" cy="143.8" r="1.68" fill="none" stroke="#5a5a5a" stroke-width="0.8"/>
<path d="M273.5,92.5 H268.5 V100.5 H276.5 V96.0" fill="none" stroke="#8a8a8a" stroke-width="0.8"/><path d="M271.5,97.5 L277.0,92.0" stroke="#8a8a8a" stroke-width="0.8"/>
<path d="M277.8,167 H272.8 V175 H280.8 V170.5" fill="none" stroke="#8a8a8a" stroke-width="0.8"/><path d="M275.8,172 L281.3,166.5" stroke="#8a8a8a" stroke-width="0.8"/>
<path d="M41.5,139.5 Q40,143.4 41.5,147.3 M47.5,139.5 Q49,143.4 47.5,147.3" fill="none" stroke="#7fae7f" stroke-width="0.9"/><rect x="42.8" y="139.8" width="3.4" height="7.2" rx="1.2" fill="#cfe5cf" stroke="#7fae7f" stroke-width="0.7"/>
<path d="M205.5,143.8 H213.2 M209.3,140 V147.6 M224.3,143.8 H232" stroke="#4a4a4a" stroke-width="0.9"/>
<rect x="248.3" y="139.5" width="8.3" height="8.3" rx="0.8" fill="none" stroke="#5a5a5a" stroke-width="0.9"/><rect x="248.3" y="139.5" width="8.3" height="2.2" fill="#5a5a5a"/><path d="M248.3,144 H256.6 M252.4,141.7 V147.8" stroke="#5a5a5a" stroke-width="0.7"/><circle cx="256.4" cy="146.5" r="2.8" fill="#f1f1f1" stroke="#5a5a5a" stroke-width="0.8"/><path d="M255.2,147.6 L257.5,145.3" stroke="#5a5a5a" stroke-width="0.6"/>
<path d="M40.2,95.2 L42.5,97.2 L44.800000000000004,95.2" fill="none" stroke="#aaa" stroke-width="0.7"/>
<path d="M110.5,114.3 L112.8,116.3 L115.1,114.3" fill="none" stroke="#aaa" stroke-width="0.7"/>
<path d="M58,169.6 L60.3,171.6 L62.6,169.6" fill="none" stroke="#aaa" stroke-width="0.7"/>
<path d="M55.8,220.8 L58.099999999999994,222.8 L60.4,220.8" fill="none" stroke="#aaa" stroke-width="0.7"/>
<path d="M42.5,196.8 L44,195.2 H49.8 L48.3,196.8Z M42.5,199.6 L44,198 H49.8 L48.3,199.6Z M42.5,202.4 L44,200.8 H49.8 L48.3,202.4Z" fill="none" stroke="#7a7a7a" stroke-width="0.8" stroke-linejoin="round"/>
<rect x="260.5" y="194.3" width="10" height="9" rx="1" fill="none" stroke="#5a5a5a" stroke-width="0.9"/><path d="M262.2,196.8 H269 M262.2,198.8 H269 M262.2,200.8 H269" stroke="#5a5a5a" stroke-width="0.6"/>
<g fill="#9dcf9d"><circle cx="274.5" cy="195.8" r="1.2"/><circle cx="278.3" cy="195.8" r="1.2"/><circle cx="274.5" cy="199" r="1.2"/><circle cx="274.5" cy="202.2" r="1.2"/><path d="M276.5,199.5 L280,203" stroke="#9dcf9d" stroke-width="0.9"/></g>
<path d="M257.5,219.6 H263.5 L265,221 V226.3 H257.5Z M259,223.3 H263.5 V226.3" fill="none" stroke="#5a5a5a" stroke-width="0.9"/>
<circle cx="274.6" cy="222.5" r="3" fill="none" stroke="#5a5a5a" stroke-width="0.9"/><path d="M276.8,224.7 L280,227.6" stroke="#5a5a5a" stroke-width="1"/>
</svg>
</div>
<div id="info">
  <div class="a" style="left:758.4px;top:635.3px;width:226.5px;height:45.6px;border:1px solid #7fae8a;border-radius:3px;background:#fff"></div>
  <div class="a" style="left:758.4px;top:635.3px;width:4.5px;height:45.6px;border-radius:3px 0 0 3px;background:#1e9a3a"></div>
  <div class="a" style="left:768px;top:639.5px;font-size:7.8px;line-height:9.1px;color:#333;white-space:nowrap">Objektname: 3DBenchy<br>Größe: 60.001 x 31.004 x 48 mm<br>Volumen: 15550.4 mm<sup style="font-size:4.5px;vertical-align:top;line-height:6px">3</sup><br>Dreiecke: 225154</div>
  <svg style="left:0;top:0" width="1024" height="731" viewBox="0 0 1024 731"><circle cx="971.5" cy="647" r="6.2" fill="#efefef"/><path d="M967.6,643.1 L975.4,650.9 M975.4,643.1 L967.6,650.9" stroke="#9a9a9a" stroke-width="0.9"/><path d="M972.5,674.5 H977" stroke="#ddd" stroke-width="1"/></svg>
</div>
<div id="scroll">
  <div class="a" style="left:277.5px;top:252.5px;width:0.8px;height:434px;background:#ececec"></div>
  <div class="a" style="left:280.2px;top:257.5px;width:4.2px;height:223px;border-radius:2.1px;background:#7c7c7c"></div>
  <div class="a" style="left:285.5px;top:60.5px;width:1px;height:626px;background:#f3f3f3"></div>
</div>
</div></div>
</body></html>
